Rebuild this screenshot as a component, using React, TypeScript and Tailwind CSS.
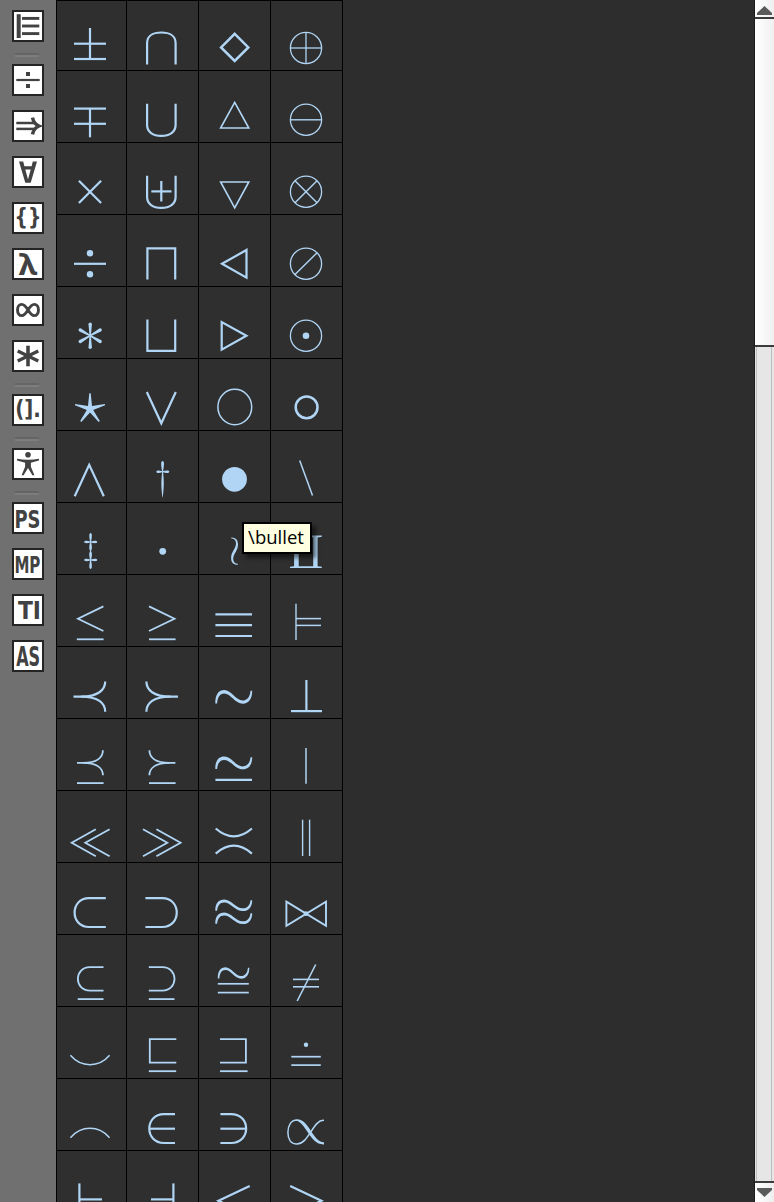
import type { ReactNode } from "react";

/* Stroked paths: [d, stroke width] */
type Stroke = [string, number?];

const L = ({ items }: { items: Stroke[] }) => (
  <>
    {items.map(([d, w], i) => (
      <path key={i} d={d} strokeWidth={w ?? 2.2} />
    ))}
  </>
);

const Ring = ({ cy = 49.8, children }: { cy?: number; children?: ReactNode }) => (
  <>
    <circle cx="36" cy={cy} r="15.6" strokeWidth="1.3" />
    {children}
  </>
);

const Dot = ({ x, y, r }: { x: number; y: number; r: number }) => (
  <circle cx={x} cy={y} r={r} fill="currentColor" stroke="none" />
);

const Solid = ({ d }: { d: string }) => <path d={d} fill="currentColor" stroke="none" />;

/* A swung dash, thin at its ends and thick through the middle */
const Tilde = ({ x = 17.3, y, sx = 1, sy = 1 }: { x?: number; y: number; sx?: number; sy?: number }) => (
  <g transform={`translate(${x} ${y}) scale(${sx} ${sy})`}>
    <path
      d="M0 13 C-.2 4 3.6 -.3 9 -.3 C16 -.3 20.5 10.2 27.3 10.2 C31.8 10.2 34.8 6.4 35.2 .4 L36.9 .4 C36.9 8.5 33.2 13.4 27.6 13.4 C19.5 13.4 15.5 3.2 8.8 3.2 C4.5 3.2 2.3 7 1.8 13 Z"
      fill="currentColor"
      stroke="none"
    />
  </g>
);

const ROWS: ReactNode[][] = [
  [
    <L items={[["M18 43.7H50"], ["M18 59H50"], ["M34 28V59"]]} />,
    <L items={[["M21.1 64.6V43C21.1 36 27 32.5 35.3 32.5S49.6 36 49.6 43V64.6"]]} />,
    <L items={[["M36.7 33.8L50.3 47.4L36.7 61L23.1 47.4Z", 2.5]]} />,
    <Ring cy={48}><L items={[["M36 32V64", 1.3], ["M20 48H52", 1.3]]} /></Ring>,
  ],
  [
    <L items={[["M18 38.6H50"], ["M18 53.8H50"], ["M34 38.6V67.3"]]} />,
    <L items={[["M21.1 33.7V55C21.1 62 27 65.9 35.3 65.9S49.6 62 49.6 55V33.7"]]} />,
    <L items={[["M36.7 32.3L50.8 58H22.6Z", 1.6]]} />,
    <Ring><L items={[["M20 49.8H52", 1.4]]} /></Ring>,
  ],
  [
    <L items={[["M22.9 38.7L45.1 61"], ["M45.1 38.7L22.9 61"]]} />,
    <L items={[["M21.1 33.7V55C21.1 62 27 65.9 35.3 65.9S49.6 62 49.6 55V33.7"], ["M25.3 49.4H45.5"], ["M35.3 39V59.5"]]} />,
    <L items={[["M22.6 40H50.8L36.7 65.8Z", 1.6]]} />,
    <Ring><L items={[["M25 38.8L47 60.8", 1.5], ["M47 38.8L25 60.8", 1.5]]} /></Ring>,
  ],
  [
    <><L items={[["M18 49.8H50"]]} /><Dot x={34} y={39.3} r={3.2} /><Dot x={34} y={60.3} r={3.2} /></>,
    <L items={[["M21.4 65.5V34.4H49.2V65.5"]]} />,
    <L items={[["M24 49.8L48.5 36V63.6Z"]]} />,
    <Ring><L items={[["M25 60.6L46.9 38.9", 1.4]]} /></Ring>,
  ],
  [
    <>
      {[0, 60, 120, 180, 240, 300].map((a) => (
        <g key={a} transform={`rotate(${a} 34.2 49.7)`}>
          <Solid d="M33.5 49.7L32.5 38.2A1.7 1.7 0 0 1 35.9 38.2L34.9 49.7Z" />
        </g>
      ))}
    </>,
    <L items={[["M21.4 33.5V64.8H49.2V33.5"]]} />,
    <L items={[["M48.4 49.8L23.7 36V63.6Z"]]} />,
    <Ring><Dot x={36} y={49.8} r={3.3} /></Ring>,
  ],
  [
    <Solid d="M33.3 35.3H34.7L36 48L49 45.9V47.2L37.2 51.9L43.8 63L42.7 64L34 54.6L25.3 64L24.2 63L30.8 51.9L19 47.2V45.9L32 48Z" />,
    <L items={[["M20.8 34L35.3 65.3L49.8 34"]]} />,
    <ellipse cx="36.8" cy="49" rx="16.9" ry="17.8" strokeWidth="1.5" />,
    <circle cx="36.6" cy="49.3" r="10.9" strokeWidth="2.5" />,
  ],
  [
    <L items={[["M18.7 66.3L33.2 34.8L47.8 66.3"]]} />,
    <>
      <Solid d="M36.6 31C38.4 31.4 38.4 33.6 37.1 41.3V42.2C38.1 52 38.1 56 36.8 67.3H36.4C35.1 56 35.1 52 36.1 42.2V41.3C34.8 33.6 34.8 31.4 36.6 31Z" />
      <Solid d="M30.3 41.8C30.7 40.2 33 40.4 36.6 41.3C40.2 40.4 43 40.2 43.4 41.8C43 43.4 40.2 43.2 36.6 42.3C33 43.2 30.7 43.4 30.3 41.8Z" />
    </>,
    <Dot x={36.5} y={49.3} r={12.4} />,
    <L items={[["M29.7 30.6L42.5 65.4", 1.5]]} />,
  ],
  [
    <>
      <Solid d="M34.6 31C36.2 31.4 36.2 33.6 35.1 40C36.2 45 36.2 47 35 49C36.2 51 36.2 53 35.1 58C36.2 64.4 36.2 66.6 34.6 67C33 66.6 33 64.4 34.1 58C33 53 33 51 34.2 49C33 47 33 45 34.1 40C33 33.6 33 31.4 34.6 31Z" />
      <Solid d="M28.1 40C28.5 38.4 31 38.6 34.6 39.5C38.2 38.6 40.9 38.4 41.3 40C40.9 41.6 38.2 41.4 34.6 40.5C31 41.4 28.5 41.6 28.1 40Z" />
      <Solid d="M28.1 58C28.5 56.4 31 56.6 34.6 57.5C38.2 56.6 40.9 56.4 41.3 58C40.9 59.6 38.2 59.4 34.6 58.5C31 59.4 28.5 59.6 28.1 58Z" />
    </>,
    <Dot x={36.7} y={49.3} r={3.4} />,
    <Solid d="M33.3 35.4C38 35.2 40 38.2 40 42.4C40 48.6 35.2 51.8 35.2 57C35.2 60 37 61.6 39.8 61.8V62.8C35.4 62.9 33.1 60.4 33.1 56C33.1 50 38 46.6 38 41.6C38 38.2 36.3 36.4 33.3 36.4Z" />,
    <Solid d="M20 33.6H32.5V34.8L28.7 35.4V64.3H43.2V35.4L39.4 34.8V33.6H51.8V34.8L47.6 35.4V64.3L51.8 64.8V66H20V64.8L24.1 64.3V35.4L20 34.8Z" />,
  ],
  [
    <L items={[["M47.4 32.4L22 44.7L47.4 57", 1.8], ["M20.8 65.3H47.6", 1.8]]} />,
    <L items={[["M23 32.4L48.5 44.7L23 57", 1.8], ["M23 65.3H49.6", 1.8]]} />,
    <L items={[["M17.4 40.3H54"], ["M17.4 51.1H54"], ["M17.4 62H54"]]} />,
    <L items={[["M26 29.7V66", 1.4], ["M26 44.6H51", 1.5], ["M26 51.4H51", 1.5]]} />,
  ],
  [
    <L items={[["M17.5 50.6H25C42 50.6 49.2 44 49.2 35.5"], ["M25 50.6C42 50.6 49.2 57.2 49.2 65.7"]]} />,
    <L items={[["M52 50.6H44.5C27.5 50.6 20.4 44 20.4 35.5"], ["M44.5 50.6C27.5 50.6 20.4 57.2 20.4 65.7"]]} />,
    <Tilde y={44.4} />,
    <L items={[["M36.4 34V65"], ["M21 65.1H52"]]} />,
  ],
  [
    <L items={[["M21 44.8H27C41 44.8 46.9 39.4 46.9 32.3", 1.8], ["M27 44.8C41 44.8 46.9 50.2 46.9 57.3", 1.8], ["M21 65.1H47.6", 1.8]]} />,
    <L items={[["M49.4 44.8H43.4C29.4 44.8 23.4 39.4 23.4 32.3", 1.8], ["M43.4 44.8C29.4 44.8 23.4 50.2 23.4 57.3", 1.8], ["M23 65.1H49.6", 1.8]]} />,
    <><Tilde y={38.9} sy={0.93} /><L items={[["M17.4 61.9H54"]]} /></>,
    <L items={[["M36 30V65.8", 1.5]]} />,
  ],
  [
    <L items={[["M39.8 39.2L15.7 52.7L39.8 66.3", 1.8], ["M53.6 39.2L29.3 52.7L53.6 66.3", 1.8]]} />,
    <L items={[["M17 39.2L41.3 52.7L17 66.3", 1.8], ["M30.4 39.2L54.6 52.7L30.4 66.3", 1.8]]} />,
    <L items={[["M17.7 38.5Q35.8 54.3 53.9 38.5"], ["M17.7 63.6Q35.8 47.8 53.9 63.6"]]} />,
    <L items={[["M32.6 29.7V66", 1.4], ["M39.6 29.7V66", 1.4]]} />,
  ],
  [
    <L items={[["M49.8 36.1H33C13.8 36.1 13.8 65 33 65H49.8"]]} />,
    <L items={[["M19.4 36.1H36.2C55.6 36.1 55.6 65 36.2 65H19.4"]]} />,
    <><Tilde y={37.8} sy={0.84} /><Tilde y={50.8} sy={0.84} /></>,
    <><L items={[["M16.4 39.6L56 63.8V39.6L16.4 63.8Z", 1.9]]} /><Dot x={36} y={51.7} r={2.4} /></>,
  ],
  [
    <L items={[["M47.5 33.1H34C17.8 33.1 17.8 56.6 34 56.6H47.5", 1.8], ["M21.7 65.1H47.5", 1.8]]} />,
    <L items={[["M22.8 33.1H36.3C52.6 33.1 52.6 56.6 36.3 56.6H22.8", 1.8], ["M22.8 65.1H48.5", 1.8]]} />,
    <><Tilde x={19.8} y={33.4} sx={0.855} sy={0.85} /><L items={[["M19.8 49.8H50.8", 1.7], ["M19.8 58.6H50.8", 1.7]]} /></>,
    <L items={[["M23 45.4H49", 1.6], ["M23 52.8H49", 1.6], ["M45.7 30.5L27.2 67", 1.6]]} />,
  ],
  [
    <L items={[["M14.4 49.2C25.2 61.8 42.8 61.8 53.6 49.2", 1.5]]} />,
    <L items={[["M50.3 33.1H23.8V56.7H50.3", 1.8], ["M22.8 65.2H50.2", 1.8]]} />,
    <L items={[["M22 33.1H47.9V56.7H22", 1.8], ["M22 65.2H49.6", 1.8]]} />,
    <><Dot x={36} y={38.7} r={2.2} /><L items={[["M21.3 50.7H50.8", 1.7], ["M21.3 59.1H50.8", 1.7]]} /></>,
  ],
  [
    <L items={[["M14.4 59.8C25.2 47.2 42.8 47.2 53.6 59.8", 1.5]]} />,
    <L items={[["M49 36.1H38C18.4 36.1 18.4 65 38 65H49"], ["M23.5 50.7H49"]]} />,
    <L items={[["M22.4 36.1H33C53.2 36.1 53.2 65 33 65H22.4"], ["M22.4 50.7H48.3"]]} />,
    <>
      <L items={[["M54 42.4C43 41.4 39 66 27 66C20.5 66 17.9 60.5 17.9 54.5C17.9 47.5 21 42 27 42", 1.5]]} />
      <Solid d="M27 41.2C39 41.2 43 64.2 54 64.2V66.4C40 67.2 35.5 43.4 26 42.8Z" />
    </>,
  ],
  [
    <L items={[["M23.4 33.4V66"], ["M23.4 49.4H46"]]} />,
    <L items={[["M47.4 33.4V66"], ["M25 49.4H47.4"]]} />,
    <L items={[["M51.7 36L20.5 50.8L51.7 65.6"]]} />,
    <L items={[["M20.2 36L51.4 50.8L20.2 65.6"]]} />,
  ],
];

const Glyph = ({ t, x, y, w, size, weight = 700, font = "DejaVu Sans" }: { t: string; x: number; y: number; w: number; size: number; weight?: number; font?: string }) => (
  <text x={x} y={y} textLength={w} lengthAdjust="spacingAndGlyphs" fontSize={size} fontWeight={weight} fontFamily={`"${font}", "DejaVu Sans", sans-serif`} fill="currentColor" stroke="none">
    {t}
  </text>
);

const GROUPS: ReactNode[][] = [
  [<L items={[["M6.7 4.2V28", 4], ["M10 8.4H27.3", 2.9], ["M10 16H27.3", 2.9], ["M10 23.6H27.3", 2.9]]} />],
  [
    <><path d="M4.3 16H27.7" strokeWidth="2.2" /><Solid d="M14 8H18V12H14ZM14 20H18V24H14Z" /></>,
    <L items={[["M4.3 13H23.5", 2.5], ["M4.3 18.9H23.5", 2.5], ["M20.5 7.6C21.3 11.8 23.6 14.6 27 16C23.6 17.4 21.3 20.2 20.5 24.4", 3.4]]} />,
    <Solid d="M7 5.4H11.2L12.4 10.2H19.6L20.8 5.4H25L18.7 26.8H13.3ZM13.3 13.6L16 23.6L18.7 13.6Z" />,
    <Glyph t="{}" x={2.6} y={22.8} w={26.8} size={23} />,
    <Glyph t="λ" x={6.8} y={26.7} w={18.4} size={28} font="Noto Sans" />,
    <path d="M16 16C13 11.2 11.7 10.4 9.8 10.4C7.3 10.4 5.5 12.8 5.5 16S7.3 21.6 9.8 21.6C11.7 21.6 13 20.8 16 16C19 11.2 20.3 10.4 22.2 10.4C24.7 10.4 26.5 12.8 26.5 16S24.7 21.6 22.2 21.6C20.3 21.6 19 20.8 16 16Z" strokeWidth="2.9" />,
    <L items={[["M16 5.7V26.3", 3.6], ["M5.7 10.9L26.3 21.1", 3.4], ["M26.3 10.9L5.7 21.1", 3.4]]} />,
  ],
  [<Glyph t="(]." x={3.2} y={23} w={25.6} size={22.5} />],
  [
    <><Dot x={16} y={6.8} r={2.8} /><Solid d="M5 10.7C12 12.2 20 12.2 27 10.7V12.6L18.9 14.8V18.8L22.4 27.2H20.4L16 20L11.6 27.2H9.6L13.1 18.8V14.8L5 12.6Z" /></>,
  ],
  [
    <Glyph t="PS" x={2.4} y={25.8} w={26} size={25.5} />,
    <Glyph t="MP" x={2.4} y={25} w={26} size={23.5} />,
    <Glyph t="TI" x={5.9} y={25} w={23} size={24.5} />,
    <Glyph t="AS" x={4.2} y={25.8} w={24} size={26} />,
  ],
];

function Toolbar() {
  return (
    <aside className="flex h-full w-14 shrink-0 flex-col bg-[#707070] pt-[10px] pl-3">
      {GROUPS.map((group, g) => (
        <div key={g}>
          {g > 0 && (
            <div className="flex h-[22px] items-start pt-[11px] pl-[3px]">
              <div className="h-1 w-6 border-t-2 border-[#656565] bg-[#7d7d7d]" />
            </div>
          )}
          <div className="flex flex-col gap-[14px]">
            {group.map((icon, i) => (
              <button key={i} className="block size-8 border-2 border-[#242424] bg-white text-[#424242]">
                <svg viewBox="2 2 28 28" className="block size-7 overflow-visible" fill="none" stroke="currentColor">
                  {icon}
                </svg>
              </button>
            ))}
          </div>
        </div>
      ))}
    </aside>
  );
}

function SymbolTable() {
  return (
    <div className="w-[287px] shrink-0 border-r border-black bg-[#2f2f2f] text-[#b1d6f5]">
      {ROWS.map((row, r) => (
        <div key={r} className={r === 0 ? "grid h-[70px] grid-cols-[70px_72px_72px_72px]" : "grid h-[72px] grid-cols-[70px_72px_72px_72px]"}>
          {row.map((symbol, c) => (
            <div key={c} className="overflow-hidden border-t border-l border-black">
              <svg width="71" height="71" viewBox="1 1 71 71" className="block max-w-none" fill="none" stroke="currentColor">
                {symbol}
              </svg>
            </div>
          ))}
        </div>
      ))}
    </div>
  );
}

function Scrollbar() {
  return (
    <div className="flex h-full w-5 shrink-0 flex-col border-l border-[#1c1c1c] bg-[#f8f8f8]">
      <div className="flex h-[17px] items-start justify-center bg-linear-to-r from-white to-[#eeeeee] pt-[6px]">
        <svg width="15" height="9" viewBox="0 0 15 9"><path d="M7.5 0L15 7V9H0V7Z" fill="#5a5a5a" /></svg>
      </div>
      <div className="h-[330px] border-y-2 border-[#3c3c3c] bg-linear-to-r from-white to-[#f0f0f0]" />
      <div className="flex grow justify-between bg-[#e6e6e6] px-px">
        <div className="w-px bg-[#bdbdbd]" />
        <div className="mr-px w-px bg-[#bdbdbd]" />
      </div>
      <div className="flex h-[21px] items-start justify-center border-t-2 border-[#3c3c3c] bg-linear-to-r from-white to-[#eeeeee] pt-[5px]">
        <svg width="15" height="9" viewBox="0 0 15 9"><path d="M0 0H15V2L7.5 9L0 2Z" fill="#5a5a5a" /></svg>
      </div>
    </div>
  );
}

export default function App() {
  return (
    <div className="relative flex h-[1202px] w-[774px] overflow-hidden bg-[#2d2d2d]">
      <Toolbar />
      <SymbolTable />
      <main className="grow" />
      <Scrollbar />
      <div
        role="tooltip"
        className="absolute top-[522px] left-[242px] flex h-8 w-[70px] items-center justify-center border-2 border-black bg-[#ffffe1] pr-[2px] pb-[2px] font-['Open_Sans','Noto_Sans',sans-serif] text-[18.5px] leading-none whitespace-nowrap text-black shadow-[4px_4px_4px_rgba(0,0,0,0.5)]"
      >
        \bullet
      </div>
    </div>
  );
}
